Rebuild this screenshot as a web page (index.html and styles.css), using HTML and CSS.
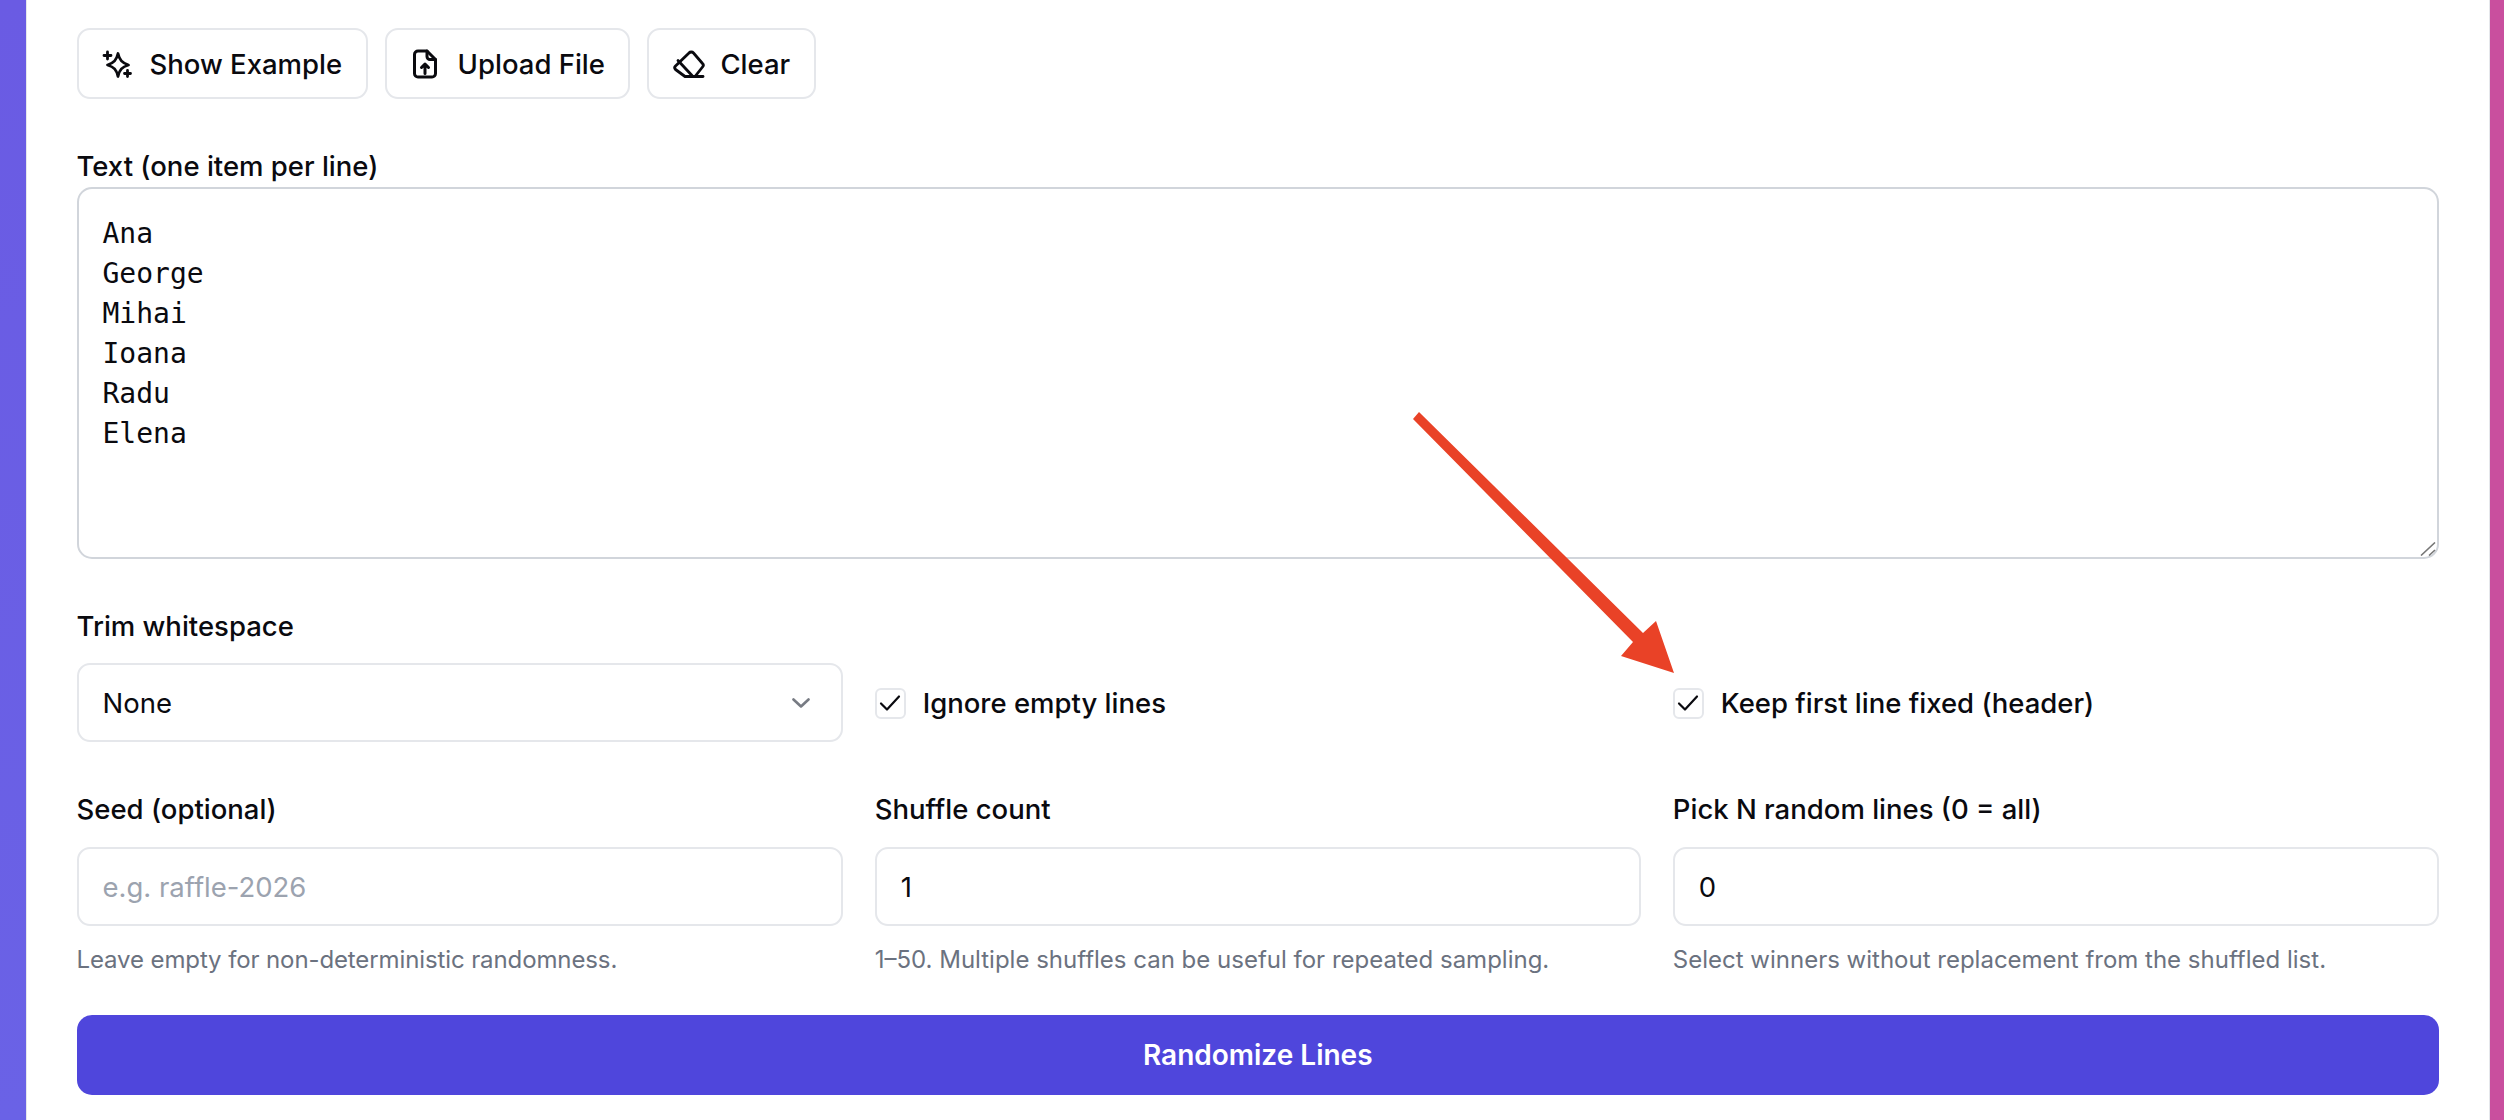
FILE: index.html
```html
<!DOCTYPE html>
<html lang="en">
<head>
<meta charset="utf-8">
<title>Randomize Lines</title>
<link rel="stylesheet" href="styles.css">
</head>
<body>
<div class="page">
  <main class="card">
    <div class="toolbar">
      <button class="tool-btn" type="button">
        <svg class="icon" viewBox="0 0 32 32" fill="none" stroke="currentColor" stroke-width="2.800" stroke-linejoin="round" stroke-linecap="round"><path d="M16 5.500C17.500 12 20 15 26.500 17 20 19 17.500 21.500 16 28.500 14.500 21.500 12 19 5.500 17 12 15 14.500 12 16 5.500Z"/><path d="M5.500 4V11M2 7.500H9M25.500 22.500V28.500M22.500 25.500H28.500"/></svg>
        <span>Show Example</span>
      </button>
      <button class="tool-btn" type="button">
        <svg class="icon" viewBox="0 0 32 32" fill="none" stroke="currentColor" stroke-width="3" stroke-linejoin="round" stroke-linecap="round"><path d="M8 3H17L25.500 11.500V25.500A3.500 3.500 0 0 1 22 29H8A3.500 3.500 0 0 1 4.500 25.500V6.500A3.500 3.500 0 0 1 8 3Z"/><path d="M17 3V8.500A3 3 0 0 0 20 11.500H25.500"/><path d="M15 25.500V16M11.500 19.500L15 16L18.500 19.500"/></svg>
        <span>Upload File</span>
      </button>
      <button class="tool-btn" type="button">
        <svg class="icon" viewBox="0 0 32 32" fill="none" stroke="currentColor" stroke-width="2.800" stroke-linejoin="round" stroke-linecap="round"><path d="M16 5A3 3 0 0 1 20.500 5L29.500 15.500A2.500 2.500 0 0 1 29.500 19L22 28.500H12L2.500 21.500A2.500 2.500 0 0 1 2.500 18Z"/><path d="M5 12.500L19 27.500"/><path d="M14 28.500H30"/></svg>
        <span>Clear</span>
      </button>
    </div>

    <section class="field field-text">
      <label class="label" for="text">Text (one item per line)</label>
      <div class="textarea-wrap">
        <textarea class="textarea" id="text" spellcheck="false">Ana
George
Mihai
Ioana
Radu
Elena</textarea>
        <svg class="resize-handle" viewBox="0 0 16 14" fill="none" stroke="#777" stroke-width="1.600"><path d="M1 13.500L15 .5M9 13.500L15 8"/></svg>
      </div>
    </section>

    <section class="grid grid-options">
      <div class="field">
        <label class="label" for="trim">Trim whitespace</label>
        <div class="control select-box" id="trim">
          <span>None</span>
          <svg class="chevron" viewBox="0 0 18 10" fill="none" stroke="currentColor" stroke-width="2.600" stroke-linecap="round" stroke-linejoin="round"><path d="M1.500 1.500L9 8.500L16.500 1.500"/></svg>
        </div>
      </div>
      <div class="check-cell">
        <label class="check">
          <span class="check-box"><svg viewBox="0 0 22 18" fill="none" stroke="currentColor" stroke-width="2.200" stroke-linecap="round" stroke-linejoin="round"><path d="M2 9.500L8 15.500L20 2.500"/></svg></span>
          <span>Ignore empty lines</span>
        </label>
      </div>
      <div class="check-cell">
        <label class="check">
          <span class="check-box"><svg viewBox="0 0 22 18" fill="none" stroke="currentColor" stroke-width="2.200" stroke-linecap="round" stroke-linejoin="round"><path d="M2 9.500L8 15.500L20 2.500"/></svg></span>
          <span>Keep first line fixed (header)</span>
        </label>
      </div>
    </section>

    <section class="grid grid-inputs">
      <div class="field">
        <label class="label" for="seed">Seed (optional)</label>
        <input class="control" id="seed" type="text" placeholder="e.g. raffle-2026">
        <p class="help help-tight">Leave empty for non-deterministic randomness.</p>
      </div>
      <div class="field">
        <label class="label" for="count">Shuffle count</label>
        <input class="control" id="count" type="text" value="1">
        <p class="help">1–50. Multiple shuffles can be useful for repeated sampling.</p>
      </div>
      <div class="field">
        <label class="label" for="pick">Pick N random lines (0 = all)</label>
        <input class="control" id="pick" type="text" value="0">
        <p class="help">Select winners without replacement from the shuffled list.</p>
      </div>
    </section>

    <button class="primary" type="button">Randomize Lines</button>

    <svg class="arrow" viewBox="0 0 280 280" fill="none">
      <path d="M10 8L4 15L224 238L212 252L265 269L247 217L234 229Z" fill="#e94227"/>
    </svg>
  </main>
</div>
</body>
</html>
```

FILE: styles.css
```css
* { box-sizing: border-box; }

html, body {
  margin: 0;
  height: 100%;
}

body {
  font-family: Inter, "Liberation Sans", sans-serif;
  color: #0a0a0f;
  overflow: hidden;
}

.page {
  height: 1120px;
  padding: 0 14px 0 26px;
  background:
    linear-gradient(180deg, #6a5be3, #6a62e6) left / 50% 100% no-repeat,
    #c94f9e;
}

.card {
  position: relative;
  height: 100%;
  padding: 28px 50px 0 49.500px;
  background: #fff;
  border-left: 1px solid #e5e7eb;
  border-right: 1px solid #e5e7eb;
}

.toolbar {
  display: flex;
  gap: 17px;
}

.tool-btn {
  display: flex;
  align-items: center;
  gap: 15.500px;
  height: 71px;
  padding: 0 23.500px;
  background: #fff;
  border: 2px solid #e5e7eb;
  border-radius: 13px;
  font: 500 27.500px Inter, sans-serif;
  color: #0a0a0f;
}

.icon {
  width: 32px;
  height: 32px;
  flex: none;
}

.field {
  display: flex;
  flex-direction: column;
  min-width: 0;
}

.field-text {
  margin-top: 48px;
}

.label {
  font-size: 27.500px;
  font-weight: 500;
  line-height: 38px;
}

.textarea-wrap {
  position: relative;
  margin-top: 2px;
}

.textarea {
  display: block;
  width: 100%;
  height: 372px;
  padding: 25px 24px 24px;
  border: 2px solid #d1d5db;
  border-radius: 15px;
  background: #fff;
  color: #0a0a0f;
  font: 400 28px/40px "DejaVu Sans Mono", monospace;
  resize: none;
  outline: none;
}

.resize-handle {
  position: absolute;
  right: 3px;
  bottom: 3px;
  width: 16px;
  height: 14px;
}

.grid {
  display: grid;
  grid-template-columns: repeat(3, 1fr);
  gap: 32px;
}

.grid-options {
  margin-top: 48px;
}

.grid-options .control {
  margin-top: 18px;
}

.grid-inputs {
  margin-top: 48px;
}

.control {
  display: block;
  width: 100%;
  height: 79px;
  margin-top: 19px;
  padding: 0 24px;
  border: 2px solid #e5e7eb;
  border-radius: 13px;
  background: #fff;
  color: #0a0a0f;
  font: 400 27.500px Inter, sans-serif;
  outline: none;
}

.control::placeholder {
  color: #9ca3af;
  opacity: 1;
}

.select-box {
  display: flex;
  align-items: center;
  justify-content: space-between;
}

.chevron {
  width: 18px;
  height: 10px;
  margin-right: 7px;
  color: #777b83;
}

.check-cell {
  display: flex;
  align-items: center;
  padding-top: 57px;
}

.check {
  display: flex;
  align-items: center;
  gap: 17px;
  font-size: 27.500px;
  font-weight: 500;
}

.check-box {
  display: flex;
  align-items: center;
  justify-content: center;
  width: 31px;
  height: 31px;
  border: 2px solid #e5e7eb;
  border-radius: 6px;
  background: #fff;
}

.check-box svg {
  width: 22px;
  height: 18px;
  flex: none;
}

.help {
  margin: 17px 0 0;
  color: #6b7280;
  font-size: 24px;
  line-height: 34px;
}

.help-tight {
  letter-spacing: -.11px;
}

.primary {
  display: block;
  width: 100%;
  height: 80px;
  margin-top: 38px;
  border: 0;
  border-radius: 15px;
  background: #4f46dc;
  color: #fff;
  font: 600 28px Inter, sans-serif;
}

.arrow {
  position: absolute;
  left: 1382px;
  top: 404px;
  width: 280px;
  height: 280px;
  pointer-events: none;
}
```
